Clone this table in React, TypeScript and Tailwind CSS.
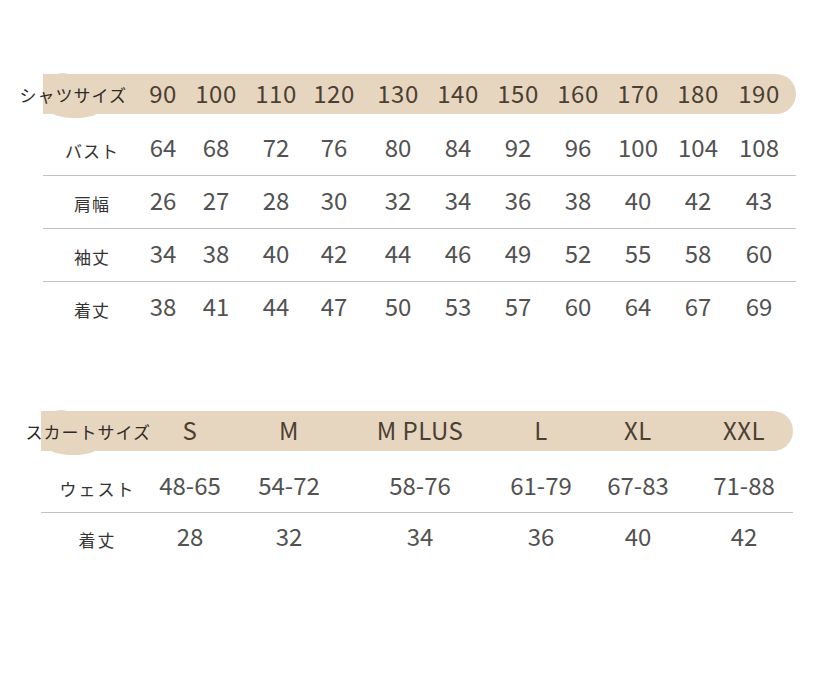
const font = "font-['Noto_Sans_CJK_JP','Noto_Sans',sans-serif]";

const shirtCols = [
  "w-[54px]",
  "w-[52px]",
  "w-[68px]",
  "w-[48px]",
  "w-[80px]",
  "w-[40px]",
  "w-[80px]",
  "w-[40px]",
  "w-[80px]",
  "w-[40px]",
  "w-[82px]",
];

const shirtHead = ["90", "100", "110", "120", "130", "140", "150", "160", "170", "180", "190"];

const shirtRows = [
  { label: "バスト", values: ["64", "68", "72", "76", "80", "84", "92", "96", "100", "104", "108"] },
  { label: "肩幅", values: ["26", "27", "28", "30", "32", "34", "36", "38", "40", "42", "43"] },
  { label: "袖丈", values: ["34", "38", "40", "42", "44", "46", "49", "52", "55", "58", "60"] },
  { label: "着丈", values: ["38", "41", "44", "47", "50", "53", "57", "60", "64", "67", "69"] },
];

const skirtCols = ["w-[76px]", "w-[122px]", "w-[140px]", "w-[102px]", "w-[92px]", "w-[120px]"];

const skirtHead = ["S", "M", "M PLUS", "L", "XL", "XXL"];

const skirtRows = [
  { label: "ウェスト", values: ["48-65", "54-72", "58-76", "61-79", "67-83", "71-88"] },
  { label: "着丈", values: ["28", "32", "34", "36", "40", "42"] },
];

function Cell({ width, children, head }: { width: string; children: string; head?: boolean }) {
  return (
    <div
      className={`flex shrink-0 justify-center whitespace-nowrap text-[24px] leading-none ${width} ${
        head ? "pb-[2px] text-[#4b3f33] tracking-[0.5px]" : "pb-[4px] text-[#525252]"
      }`}
    >
      {children}
    </div>
  );
}

function Band({ children }: { children: React.ReactNode }) {
  return (
    <div className="relative flex h-[40px] items-center rounded-l-[20px] rounded-r-full bg-[#e6d6bf]">
      <div className="absolute left-[0px] top-[-1px] h-[42px] w-[40px] rounded-[50%] bg-[#e6d6bf]" aria-hidden="true" />
      <div className="absolute left-[8px] top-[30px] h-[14px] w-[48px] rounded-[50%] bg-[#e6d6bf]" aria-hidden="true" />
      <div className="relative flex items-center">{children}</div>
    </div>
  );
}

export default function App() {
  return (
    <div className={`h-[675px] w-[824px] overflow-hidden bg-white ${font}`}>
      <div className="ml-[43px] mt-[74px] w-[753px]">
        <Band>
          <div className="flex w-[93px] shrink-0 justify-end whitespace-nowrap pr-[9px] pt-[1px] text-[17px] tracking-[1px] text-[#2e2a26]">
            シャツサイズ
          </div>
          {shirtHead.map((v, i) => (
            <Cell key={v} width={shirtCols[i]} head>
              {v}
            </Cell>
          ))}
        </Band>

        <div className="mt-[8px]">
          {shirtRows.map((row, r) => (
            <div
              key={row.label}
              className={`flex h-[53px] items-center ${r > 0 ? "border-t border-[#c2c2c2]" : ""}`}
            >
              <div className="flex w-[93px] shrink-0 justify-center pl-[5px] pt-[4px] text-[17px] tracking-[1px] text-[#333]">
                {row.label}
              </div>
              {row.values.map((v, i) => (
                <Cell key={i} width={shirtCols[i]}>
                  {v}
                </Cell>
              ))}
            </div>
          ))}
        </div>
      </div>

      <div className="ml-[41px] mt-[77px] w-[752px]">
        <Band>
          <div className="flex w-[111px] shrink-0 justify-end whitespace-nowrap pr-[1px] pt-[1px] text-[17px] tracking-[1px] text-[#2e2a26]">
            スカートサイズ
          </div>
          {skirtHead.map((v, i) => (
            <Cell key={v} width={skirtCols[i]} head>
              {v}
            </Cell>
          ))}
        </Band>

        <div className="mt-[10px]">
          {skirtRows.map((row, r) => (
            <div
              key={row.label}
              className={`flex h-[51px] items-center ${r > 0 ? "border-t border-[#c2c2c2]" : ""}`}
            >
              <div className="flex w-[111px] shrink-0 justify-center pl-[2px] pt-[4px] text-[17px] tracking-[2px] text-[#333]">
                {row.label}
              </div>
              {row.values.map((v, i) => (
                <Cell key={i} width={skirtCols[i]}>
                  {v}
                </Cell>
              ))}
            </div>
          ))}
        </div>
      </div>
    </div>
  );
}
